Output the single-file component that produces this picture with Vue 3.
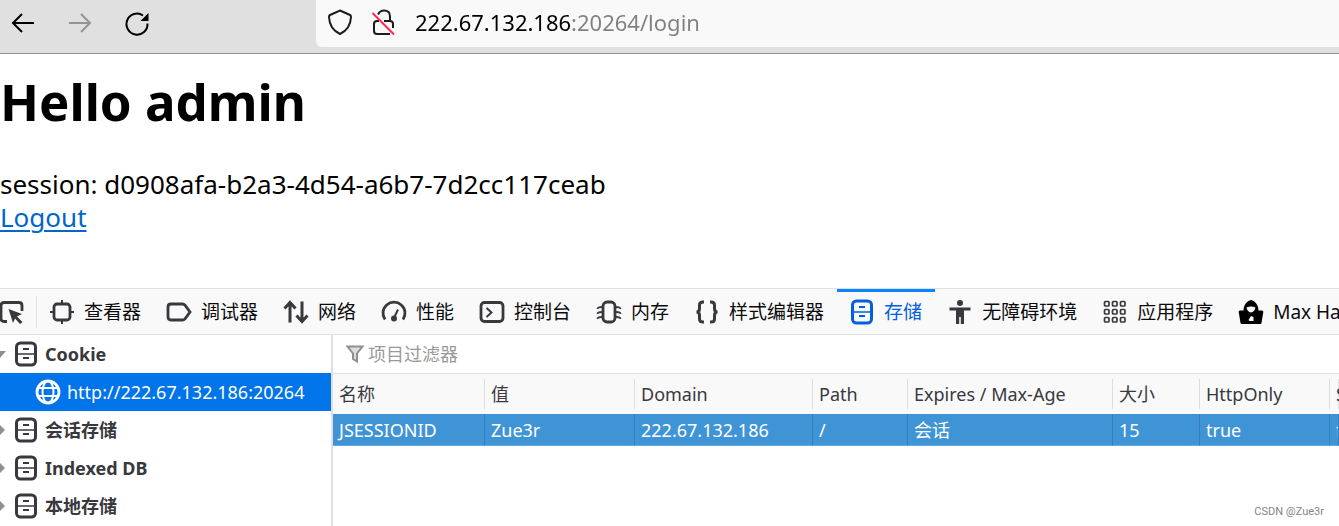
<script setup>
import { ref } from 'vue';

const url = ref('222.67.132.186:20264/login');
const filter = ref('');
const activeTab = ref('storage');
const selectedHost = ref('http://222.67.132.186:20264');

const storageIcon = '<rect x="2.5" y="1" width="19" height="22" rx="4" stroke-width="3"/><path d="M3 12h18" stroke-width="1.5"/><path d="M9 7h6M9 16h6" stroke-width="2"/>';

const tabs = [
  { id: 'inspector', label: '查看器', icon: '<rect x="4" y="4" width="16" height="16" rx="3" stroke-width="2.8"/><path d="M12 0v4M12 20v4M0 12h4M20 12h4" stroke-width="2"/>' },
  { id: 'debugger', label: '调试器', icon: '<path d="M4 4h11.500q1.500 0 2.500 1.200L23 12l-5 6.800q-1 1.200-2.500 1.200H4q-3 0-3-3V7q0-3 3-3z" stroke-width="2.800"/>' },
  { id: 'network', label: '网络', icon: '<path d="M6 22.500V3M0.500 8.500L6 2.500l5.500 6M18 1.500V21M12.500 15.500l5.500 6 5.500-6" stroke-width="3"/>' },
  { id: 'performance', label: '性能', icon: '<path d="M3 19.500A11 11 0 1 1 21 19.500" stroke-width="2.800"/><path d="M12 18l4-8.500" stroke-width="2"/><circle cx="12" cy="18.500" r="3" fill="currentColor" stroke="none"/>' },
  { id: 'console', label: '控制台', icon: '<rect x="1" y="2.500" width="22" height="19" rx="3.500" stroke-width="2.800"/><path d="M6.500 8l5 4.500-5 4.500" stroke-width="2"/>' },
  { id: 'memory', label: '内存', icon: '<rect x="6" y="2" width="12" height="20" rx="4" stroke-width="2.800"/><path d="M0.500 9q0-2 4.500-2M0.500 14q0-2 4.500-2M0.500 19q0-2 4.500-2M23.500 9q0-2-4.500-2M23.500 14q0-2-4.500-2M23.500 19q0-2-4.500-2" stroke-width="1.800"/>' },
  { id: 'style', label: '样式编辑器', icon: '<path d="M9 2H8Q4.500 2 4.500 5v3.500Q4.500 12 1.500 12q3 0 3 3.500V19q0 3 3.500 3h1M15 2h1q3.500 0 3.500 3v3.500q0 3.500 3 3.500-3 0-3 3.500V19q0 3-3.500 3h-1" stroke-width="3"/>' },
  { id: 'storage', label: '存储', icon: storageIcon },
  { id: 'a11y', label: '无障碍环境', icon: '<g fill="currentColor" stroke="none"><circle cx="12" cy="3" r="3"/><path d="M1.500 7.500h21v3H16V24h-3.200v-7h-1.600v7H8V10.500H1.500z"/></g>' },
  { id: 'application', label: '应用程序', icon: '<g stroke-width="1.700"><rect x="1.500" y="1.500" width="4.500" height="4.500" rx="1"/><rect x="9.500" y="1.500" width="4.500" height="4.500" rx="1"/><rect x="17.500" y="1.500" width="4.500" height="4.500" rx="1"/><rect x="1.500" y="9.500" width="4.500" height="4.500" rx="1"/><rect x="9.500" y="9.500" width="4.500" height="4.500" rx="1"/><rect x="17.500" y="9.500" width="4.500" height="4.500" rx="1"/><rect x="1.500" y="17.500" width="4.500" height="4.500" rx="1"/><rect x="9.500" y="17.500" width="4.500" height="4.500" rx="1"/><rect x="17.500" y="17.500" width="4.500" height="4.500" rx="1"/></g>' },
  { id: 'hackbar', label: 'Max HackBar', icon: '<path fill="#000" stroke="none" fill-rule="evenodd" d="M12 0c4 1 7.500 5 7.500 10.500H23q1.500 0 1.300 1.500L22.500 23q-.2 1-1.200 1H2.700q-1 0-1.200-1L-.3 12q-.2-1.500 1.300-1.500h3.500C4.500 5 8 1 12 0zM7.500 7.500q1 4.500 4.500 5 3.500-.5 4.500-5-4.500-2-9 0zM12 16l-2.500 4 1 1h4v-4z"/>' }
];

const stores = [
  { name: 'Cookie', open: true, hosts: ['http://222.67.132.186:20264'] },
  { name: '会话存储', open: false, hosts: [] },
  { name: 'Indexed DB', open: false, hosts: [] },
  { name: '本地存储', open: false, hosts: [] }
];

const columns = [
  { key: 'name', label: '名称' },
  { key: 'value', label: '值' },
  { key: 'domain', label: 'Domain' },
  { key: 'path', label: 'Path' },
  { key: 'expires', label: 'Expires / Max-Age' },
  { key: 'size', label: '大小' },
  { key: 'httpOnly', label: 'HttpOnly' },
  { key: 'secure', label: 'Secure' }
];

const cookies = [
  { name: 'JSESSIONID', value: 'Zue3r', domain: '222.67.132.186', path: '/', expires: '会话', size: '15', httpOnly: 'true', secure: 'false' }
];
</script>

<template>
  <div class="browser">
    <header class="nav-bar">
      <div class="nav-buttons">
        <button type="button" class="nav-btn" aria-label="Back">
          <svg viewBox="0 0 24 24"><path d="M23 12H2M11 3L2 12l9 9" /></svg>
        </button>
        <button type="button" class="nav-btn" aria-label="Forward" disabled>
          <svg viewBox="0 0 24 24"><path d="M1 12h21M13 3l9 9-9 9" /></svg>
        </button>
        <button type="button" class="nav-btn" aria-label="Reload">
          <svg viewBox="0 0 24 24"><path d="M22.500 12.500A10.500 10.500 0 1 1 18 4.500" /><path d="M23.500 2v8h-8z" fill="currentColor" stroke="none" /></svg>
        </button>
      </div>
      <div class="url-bar">
        <svg class="url-icon" viewBox="0 0 26 26"><path d="M13 1.500L23 6q1 .5 1 2-.5 12-11 17Q2.500 20 2 8q0-1.500 1-2z" /></svg>
        <svg class="url-icon" viewBox="0 0 26 26"><path d="M7 5.500Q9 1.500 13 1.500q6 0 6 6V12M8 12H6q-3 0-3 3v7q0 3 3 3h13M13 12h6q3 0 3 3v4" /><path class="slash" d="M1.500 4L23 25.500" /></svg>
        <input v-model="url" class="url-input" type="text" aria-label="Address" spellcheck="false" />
      </div>
    </header>

    <main class="page">
      <h1>Hello admin</h1>
      <p>session: d0908afa-b2a3-4d54-a6b7-7d2cc117ceab</p>
      <a href="#logout">Logout</a>
    </main>

    <section class="devtools">
      <nav class="toolbar">
        <button type="button" class="picker" aria-label="Pick element">
          <svg viewBox="0 0 24 24"><path d="M7 21.500H4q-3 0-3-3v-13q0-3 3-3h15q3 0 3 3V11" stroke-width="2.800" /><path d="M8.500 9L22 14l-5 2.500 5.500 5.500-2.500 2-5-5.500L13 23z" fill="currentColor" stroke="none" /></svg>
        </button>
        <button v-for="tab in tabs" :key="tab.id" type="button" :class="['tab', { active: activeTab === tab.id }]" @click="activeTab = tab.id">
          <svg viewBox="0 0 24 24" v-html="tab.icon"></svg>
          <span>{{ tab.label }}</span>
        </button>
      </nav>

      <div class="storage">
        <ul class="tree">
          <li v-for="store in stores" :key="store.name">
            <button type="button" class="tree-row">
              <svg class="twisty" viewBox="0 0 6 14"><path :d="store.open ? 'M-6 4H6L0 11z' : 'M-1 1L5 7l-6 6z'" /></svg>
              <svg class="tree-icon" viewBox="0 0 24 24" v-html="storageIcon"></svg>
              <span>{{ store.name }}</span>
            </button>
            <button v-for="host in store.hosts" :key="host" type="button" :class="['tree-row', 'host', { selected: selectedHost === host }]" @click="selectedHost = host">
              <svg class="tree-icon" viewBox="0 0 24 24"><circle cx="12" cy="12" r="11" stroke-width="2.800" /><ellipse cx="12" cy="12" rx="5.500" ry="11" stroke-width="2" /><path d="M2 8h20M2 16h20" stroke-width="2" /></svg>
              <span>{{ host }}</span>
            </button>
          </li>
        </ul>

        <div class="content">
          <label class="filter">
            <svg viewBox="0 0 18 18"><path d="M1.500 1.500h15L11 8.500v8L7 14V8.500z" fill="#ddd" /></svg>
            <input v-model="filter" type="text" placeholder="项目过滤器" aria-label="项目过滤器" />
          </label>
          <table>
            <colgroup>
              <col v-for="col in columns" :key="col.key" :class="'col-' + col.key" />
            </colgroup>
            <thead>
              <tr>
                <th v-for="col in columns" :key="col.key"><span>{{ col.label }}</span></th>
              </tr>
            </thead>
            <tbody>
              <tr v-for="cookie in cookies" :key="cookie.name">
                <td v-for="col in columns" :key="col.key">{{ cookie[col.key] }}</td>
              </tr>
            </tbody>
          </table>
        </div>
      </div>
    </section>

    <span class="watermark">CSDN @Zue3r</span>
  </div>
</template>

<style>
body { margin: 0; background: #fff; }
</style>

<style scoped>
.browser { position: relative; display: flex; flex-direction: column; min-height: 100vh; overflow: hidden; font-family: 'Noto Sans', 'Noto Sans CJK SC', sans-serif; color: #000; }
button, input { font: inherit; color: inherit; background: none; border: none; padding: 0; margin: 0; outline: none; }
button { cursor: pointer; }
svg { display: block; flex: none; overflow: visible; fill: none; stroke: currentColor; }

.nav-bar { display: flex; align-items: flex-start; height: 53px; background: #e0e0e0; border-bottom: 1px solid #8f8f8f; }
.nav-buttons { display: flex; gap: 33px; width: 305px; padding: 11px 0 0 11px; }
.nav-btn svg { width: 24px; height: 24px; stroke-width: 2; }
.nav-btn:disabled { color: #949494; }
.url-bar { flex: 1; display: flex; align-items: center; gap: 18px; height: 47px; padding: 0 0 4px 11px; box-sizing: border-box; background: #f9f9f9; border-bottom-left-radius: 6px; }
.url-icon { width: 26px; height: 26px; stroke: #1c1c1c; stroke-width: 2; }
.slash { stroke: #ff2850; }
/* host is dark, port and path are dimmed */
.url-input { flex: 1; min-width: 0; height: 32px; font-size: 22px; line-height: 32px; color: transparent; caret-color: #000; background: linear-gradient(to right, #000 156px, #808080 156px); -webkit-background-clip: text; background-clip: text; }

.page { height: 234px; font-size: 26px; line-height: 33px; }
.page h1 { margin: 0; padding: 12px 0 32px; font-size: 51px; line-height: 70px; font-weight: 700; }
.page p { margin: 0; }
.page a { color: #0066cc; text-decoration: underline; text-underline-offset: 3px; text-decoration-thickness: 2px; }

.devtools { flex: 1; display: flex; flex-direction: column; border-top: 1px solid #e0e0e2; }
.toolbar { display: flex; height: 45px; background: #f9f9fa; border-bottom: 1px solid #e0e0e2; overflow: hidden; }
.picker { flex: none; display: flex; align-items: center; width: 36px; height: 32px; margin: 7px 0; border-right: 1px solid #e0e0e2; box-sizing: content-box; color: #38383d; }
.picker svg { width: 24px; height: 24px; }
.tab { flex: none; display: flex; align-items: center; gap: 10px; padding: 0 13px; font-size: 19px; line-height: 28px; color: #0c0c0d; border-top: 3px solid transparent; border-bottom: 3px solid transparent; white-space: nowrap; }
.tab svg { width: 24px; height: 24px; color: #38383d; }
.tab.active, .tab.active svg { color: #0060df; }
.tab.active { border-top-color: #0a84ff; }

.storage { flex: 1; display: flex; }
.tree { width: 331px; flex: none; margin: 0; padding: 0; list-style: none; border-right: 2px solid #e0e0e2; }
.tree-row { display: flex; align-items: center; gap: 7px; width: 100%; height: 38px; font-size: 18px; line-height: 24px; font-weight: 700; color: #38383d; text-align: left; }
.twisty { width: 6px; height: 14px; }
.twisty path { fill: #8f8f8f; stroke: none; }
.tree-row .twisty + .tree-icon { margin-left: 1px; }
.tree-icon { width: 24px; height: 24px; }
.host { padding-left: 36px; font-weight: 400; }
.host.selected { background: #0074e8; color: #fff; }

.content { flex: 1; min-width: 0; }
.filter { display: flex; align-items: center; gap: 4px; height: 38px; padding-left: 13px; color: #8f8f8f; font-size: 18px; border-bottom: 1px solid #e0e0e2; }
.filter svg { width: 18px; height: 18px; stroke-width: 2; }
.filter input { flex: 1; min-width: 0; }
.filter input::placeholder { color: #999; opacity: 1; }

table { width: 100%; table-layout: fixed; border-collapse: separate; border-spacing: 0; font-size: 18px; line-height: 24px; }
.col-name { width: 152px; }
.col-value { width: 150px; }
.col-domain { width: 178px; }
.col-path { width: 95px; }
.col-expires { width: 205px; }
.col-size { width: 87px; }
.col-httpOnly { width: 130px; }
th, td { box-sizing: border-box; text-align: left; font-weight: 400; white-space: nowrap; overflow: hidden; }
th { height: 40px; padding: 0; background: #f9f9fa; color: #38383d; }
th span { display: block; height: 30px; line-height: 30px; padding-left: 6px; border-right: 1px solid #dedee0; }
td { height: 32px; padding: 0 0 0 6px; color: #fff; background: #3f94d6; border-right: 1px solid #3480be; border-bottom: 1px solid #65a9dd; }

.watermark { position: absolute; right: 15px; bottom: 6px; font-family: Roboto, sans-serif; font-size: 11px; line-height: 16px; color: #858585; }
</style>
